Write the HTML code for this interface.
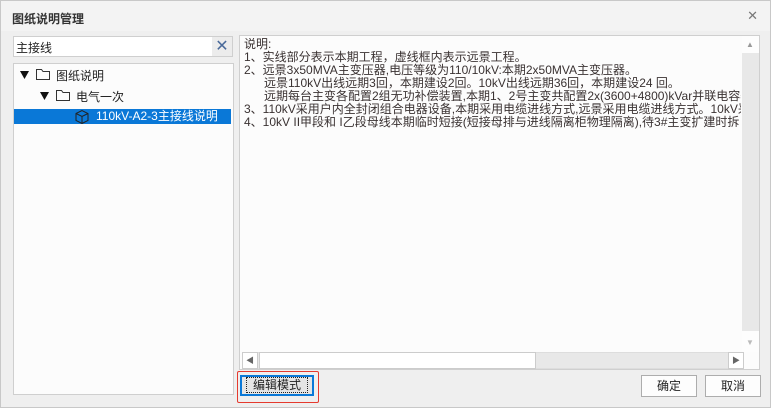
<!DOCTYPE html>
<html><head><meta charset="utf-8"><style>
*{margin:0;padding:0;box-sizing:border-box}
body{width:771px;height:408px;background:#fff;font-family:"Liberation Sans","Noto Sans CJK SC",sans-serif;font-size:12px;color:#333;position:relative;overflow:hidden}
.win{position:absolute;left:0;top:0;width:771px;height:408px;border:1px solid #c8c8c8;background:#efefef}
.title{position:absolute;left:0;top:0;width:769px;height:30px;background:#f3f3f3;font-size:12px;font-weight:bold;color:#333;padding:9px 0 0 11px}
.close{position:absolute;right:12px;top:7px;font-size:13px;color:#777;font-weight:normal}
.box{position:absolute;background:#fcfcfc;border:1px solid #cfcfcf}
.ab{position:absolute}
.txt{position:absolute;left:243px;top:37px;line-height:13px;font-size:12px;white-space:nowrap;color:#3a3232;width:497px;overflow:hidden}
.btn{position:absolute;border:1px solid #adadad;background:#fdfdfd;text-align:center;line-height:20px;font-size:12px;color:#222}
</style></head><body>
<div class="win">
<div class="title">图纸说明管理<span class="close">✕</span></div>
<div class="box" style="left:12px;top:35px;width:220px;height:21px;background:#fff"></div>
<div class="ab" style="left:15px;top:38px;font-size:12px;color:#222">主接线</div>
<div class="ab" style="left:211px;top:36px;width:20px;height:19px;background:#ececec;color:#4a6a9a;font-size:16px;line-height:19px;text-align:center">✕</div>
<div class="box" style="left:12px;top:62px;width:221px;height:332px"></div>
<svg class="ab" style="left:19px;top:70px" width="10" height="9"><path d="M0 0h9l-4.5 8z" fill="#111"/></svg>
<svg class="ab" style="left:35px;top:67px" width="14" height="12"><path d="M0.5 1.5h5l1.5 2h6.5v8h-13z" fill="none" stroke="#333"/></svg>
<div class="ab" style="left:55px;top:66px;color:#222">图纸说明</div>
<svg class="ab" style="left:39px;top:91px" width="10" height="9"><path d="M0 0h9l-4.5 8z" fill="#111"/></svg>
<svg class="ab" style="left:55px;top:88px" width="14" height="12"><path d="M0.5 1.5h5l1.5 2h6.5v8h-13z" fill="none" stroke="#333"/></svg>
<div class="ab" style="left:75px;top:87px;color:#222">电气一次</div>
<div class="ab" style="left:13px;top:108px;width:217px;height:15px;background:#0a78d7"></div>
<svg class="ab" style="left:74px;top:108px" width="14" height="15"><path d="M1 4.5l6-3 6 3v7l-6 3-6-3z M1 4.5l6 3 6-3 M7 7.5v7" fill="none" stroke="#222"/></svg>
<div class="ab" style="left:95px;top:108px;color:#fff;line-height:15px">110kV-A2-3主接线说明</div>
<div class="box" style="left:238px;top:34px;width:521px;height:335px"></div>
<div class="txt">说明:<br>1、实线部分表示本期工程，虚线框内表示远景工程。<br>2、远景3x50MVA主变压器,电压等级为110/10kV:本期2x50MVA主变压器。<br>&nbsp;&nbsp;&nbsp;&nbsp;&nbsp;&nbsp;远景110kV出线远期3回，本期建设2回。10kV出线远期36回，本期建设24 回。<br>&nbsp;&nbsp;&nbsp;&nbsp;&nbsp;&nbsp;远期每台主变各配置2组无功补偿装置,本期1、2号主变共配置2x(3600+4800)kVar并联电容器<br>3、110kV采用户内全封闭组合电器设备,本期采用电缆进线方式,远景采用电缆进线方式。10kV采<br>4、10kV II甲段和 I乙段母线本期临时短接(短接母排与进线隔离柜物理隔离),待3#主变扩建时拆</div>
<div class="ab" style="left:741px;top:35px;width:17px;height:316px;background:#fdfdfd"></div>
<div class="ab" style="left:741px;top:52px;width:17px;height:278px;background:#e8e8e8"></div>
<div class="ab" style="left:745px;top:39px;font-size:8px;color:#999">▲</div>
<div class="ab" style="left:745px;top:337px;font-size:8px;color:#bbb">▼</div>
<div class="ab" style="left:241px;top:351px;width:502px;height:17px;background:#e8e8e8;border:1px solid #ddd"></div>
<div class="ab" style="left:241px;top:351px;width:16px;height:17px;background:#fff;border:1px solid #ccc;font-size:8px;color:#666;text-align:center;line-height:15px">◀</div>
<div class="ab" style="left:258px;top:351px;width:277px;height:17px;background:#fff;border:1px solid #ccc"></div>
<div class="ab" style="left:727px;top:351px;width:16px;height:17px;background:#fff;border:1px solid #ccc;font-size:8px;color:#666;text-align:center;line-height:15px">▶</div>
<div class="ab" style="left:236px;top:370px;width:82px;height:32px;border:1px solid #e53a2e;border-radius:2px"></div>
<div class="btn" style="left:239px;top:374px;width:74px;height:21px;border:2px solid #0a78d7;background:#e5e5e5;line-height:17px"><span style="outline:1px dotted #222;padding:0 6px">编辑模式</span></div>
<div class="btn" style="left:640px;top:374px;width:56px;height:22px">确定</div>
<div class="btn" style="left:704px;top:374px;width:56px;height:22px">取消</div>
</div>
</body></html>
